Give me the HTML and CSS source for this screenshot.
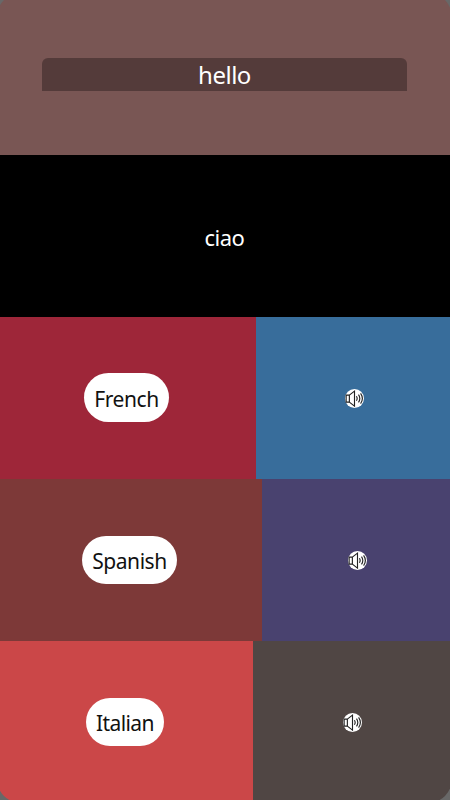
FILE: index.html
```
<!DOCTYPE html>
<html lang="en">
  <head>
    <meta charset="UTF-8" />
    <meta name="viewport" content="width=device-width, initial-scale=1.0" />
    <title>Translator</title>
    <link rel="stylesheet" href="styles.css">
  </head>
  <body>
    <svg width="0" height="0" class="sprite">
      <symbol id="speaker" viewBox="0 0 20 20">
        <circle cx="10" cy="10" r="10" fill="#fff" />
        <g fill="none" stroke="#222" stroke-width="1.2">
          <path d="M1.2 6.4H4.6V13.8H1.2zM4.6 6.4L10 2.2V18L4.6 13.8" />
          <path d="M12 7.6q1.6 2.4 0 4.8M14.2 6q2.8 4 0 8M16.4 4.6q3.8 5.4 0 10.8" />
        </g>
      </symbol>
    </svg>
    <main class="app">
      <header class="search">
        <input class="word" type="text" name="word" value="hello" aria-label="Word" />
      </header>
      <section class="result">ciao</section>
      <section class="row french">
        <div class="language"><button class="pill">French</button></div>
        <div class="sound"><svg class="speaker"><use href="#speaker" /></svg></div>
      </section>
      <section class="row spanish">
        <div class="language"><button class="pill">Spanish</button></div>
        <div class="sound"><svg class="speaker"><use href="#speaker" /></svg></div>
      </section>
      <section class="row italian">
        <div class="language"><button class="pill">Italian</button></div>
        <div class="sound"><svg class="speaker"><use href="#speaker" /></svg></div>
      </section>
    </main>
  </body>
</html>
```
FILE: styles.css
```
* {
  box-sizing: border-box;
}

body {
  margin: 0;
  height: 800px;
  overflow: hidden;
  background-color: #686868;
  font-family: "Noto Sans", "Open Sans", sans-serif;
}

.sprite {
  display: none;
}

.app {
  display: grid;
  grid-template-rows: repeat(5, 162px);
  width: 455px;
  margin: -7px 0 0 -3px;
  border-radius: 24px;
  overflow: hidden;
}

.search {
  display: flex;
  justify-content: center;
  align-items: center;
  background-color: #795654;
}

.word {
  width: 365px;
  height: 33px;
  padding: 0;
  border: 0;
  border-radius: 6px 6px 0 0;
  outline: none;
  background-color: #543b3a;
  color: #fff;
  font-family: inherit;
  font-size: 24px;
  letter-spacing: -0.5px;
  text-align: center;
}

.result {
  display: flex;
  justify-content: center;
  align-items: center;
  padding-top: 2px;
  background-color: #000;
  color: #fff;
  font-size: 22px;
  letter-spacing: -0.5px;
}

.row {
  display: grid;
}

.language,
.sound {
  display: flex;
  justify-content: center;
  align-items: center;
}

.language {
  padding-bottom: 1px;
}

.pill {
  height: 48px;
  padding: 2px 10px 0;
  border: 0;
  border-radius: 25px;
  background-color: #fff;
  color: #111;
  font-family: inherit;
  font-size: 21px;
  letter-spacing: -0.45px;
}

.speaker {
  width: 19px;
  height: 19px;
}

.french {
  grid-template-columns: 259px 1fr;
}

.french .language {
  background-color: #9e2639;
}

.french .pill {
  height: 49px;
}

.french .sound {
  background-color: #386d9b;
}

.spanish {
  grid-template-columns: 265px 1fr;
}

.spanish .language {
  background-color: #7d3938;
}

.spanish .sound {
  background-color: #49426f;
}

.italian {
  grid-template-columns: 256px 1fr;
}

.italian .language {
  background-color: #cb4748;
}

.italian .pill {
  letter-spacing: -0.6px;
}

.italian .sound {
  background-color: #504644;
}
```
